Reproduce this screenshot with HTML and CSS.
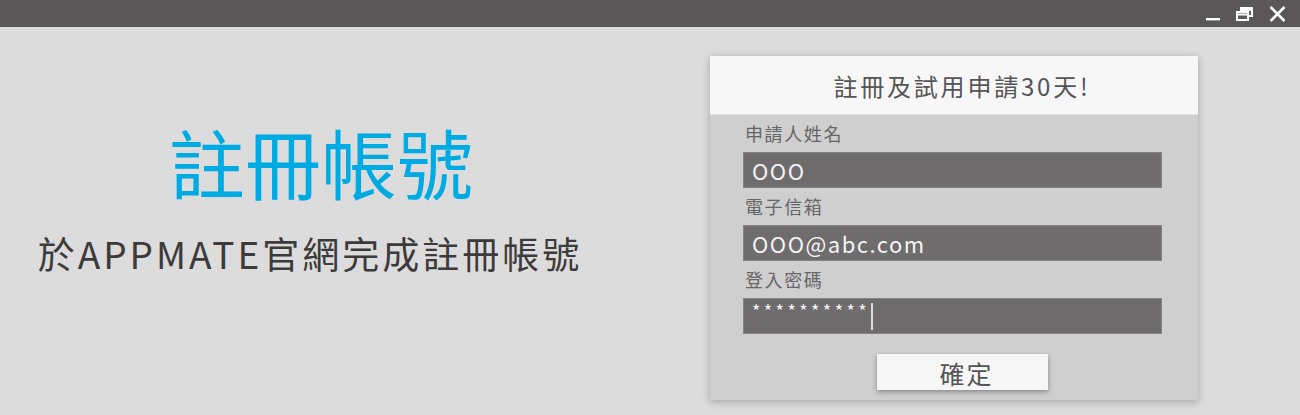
FILE: index.html
```html
<!DOCTYPE html>
<html lang="zh-Hant">
<head>
    <meta charset="UTF-8">
    <meta name="viewport" content="width=device-width, initial-scale=1.0">
    <title>註冊帳號</title>
    <link rel="stylesheet" href="styles.css">
</head>
<body>
    <div class="titlebar">
        <span class="win-btn">
            <svg width="16" height="16" viewBox="0 0 16 16"><rect x="1" y="12" width="14" height="2.4" fill="#fff"/></svg>
        </span>
        <span class="win-btn">
            <svg width="20" height="16" viewBox="0 0 20 16" fill="none" stroke="#fff" stroke-width="2">
                <rect x="2" y="6" width="11" height="8"/>
                <path d="M6 6V2h11v8h-4"/>
                <path d="M2 8.5h11M6 4h11"/>
            </svg>
        </span>
        <span class="win-btn">
            <svg width="17" height="16" viewBox="0 0 17 16"><path d="M1.5 1l14 14M15.5 1l-14 14" stroke="#fff" stroke-width="2.6"/></svg>
        </span>
    </div>

    <div class="main">
        <div class="intro">
            <h1>註冊帳號</h1>
            <p>於APPMATE官網完成註冊帳號</p>
        </div>

        <div class="card">
            <div class="card-head">註冊及試用申請30天!</div>
            <form class="card-body" id="reg-form">
                <label for="name">申請人姓名</label>
                <input type="text" id="name" value="OOO">
                <label for="email">電子信箱</label>
                <input type="text" id="email" value="OOO@abc.com">
                <label for="pass">登入密碼</label>
                <div class="field">
                    <span class="stars">**********</span><span class="caret"></span>
                </div>
                <button type="submit">確定</button>
            </form>
        </div>
    </div>
</body>
</html>
```

FILE: styles.css
```css
body {
    margin: 0;
    background-color: #dcdcdc;
    font-family: "Noto Sans CJK TC", "Noto Sans", sans-serif;
    color: #444;
    height: 415px;
    overflow: hidden;
}
.titlebar {
    height: 27px;
    background-color: #595758;
    display: flex;
    justify-content: flex-end;
    align-items: center;
    gap: 14px;
    padding-right: 14px;
}
.win-btn svg {
    display: block;
}
.main {
    display: flex;
    padding-top: 29px;
}
.intro {
    width: 640px;
    padding-top: 63px;
    text-align: center;
}
h1 {
    margin: 0;
    color: #00aae3;
    font-size: 76px;
    font-weight: 400;
    line-height: 84px;
    padding-left: 2px;
}
p {
    margin: 25px 20px 0 0;
    font-size: 37px;
    line-height: 50px;
    letter-spacing: 3px;
    color: #3c3a3a;
}
.card {
    margin-left: 70px;
    width: 488px;
    height: 344px;
    background-color: #cfcfcf;
    box-shadow: 0 2px 8px rgba(0, 0, 0, 0.25);
}
.card-head {
    height: 59px;
    background-color: #f7f7f7;
    border-bottom: 1px solid #e2e2e2;
    box-sizing: border-box;
    display: flex;
    align-items: center;
    justify-content: center;
    font-size: 24px;
    letter-spacing: 2.8px;
    padding-left: 16px;
    color: #555;
}
.card-body {
    display: flex;
    flex-direction: column;
    padding: 6px 36px 0 33px;
}
label {
    font-size: 18px;
    line-height: 25px;
    color: #666;
    letter-spacing: 1.6px;
    padding: 0 2px;
    margin-bottom: 6px;
}
input, .field {
    height: 36px;
    box-sizing: border-box;
    background-color: #6e6c6d;
    border: 1px solid #858384;
    color: #f4f4f4;
    font-family: inherit;
    font-size: 22px;
    letter-spacing: 1.5px;
    padding: 0 8px;
    margin: 0 0 6px;
    outline: none;
}
.field {
    display: flex;
    align-items: center;
}
.stars {
    font-size: 18px;
    letter-spacing: 3.4px;
    margin-top: -12px;
}
.caret {
    width: 2px;
    height: 27px;
    background-color: #ddd;
    margin-left: 1px;
}
button {
    align-self: center;
    margin: 14px 0 0 20px;
    width: 171px;
    height: 36px;
    background-color: #f6f6f6;
    border: none;
    box-shadow: 0 2px 5px rgba(0, 0, 0, 0.35);
    font-family: inherit;
    font-size: 25px;
    letter-spacing: 2px;
    padding-left: 14px;
    color: #555;
    cursor: pointer;
}
```
